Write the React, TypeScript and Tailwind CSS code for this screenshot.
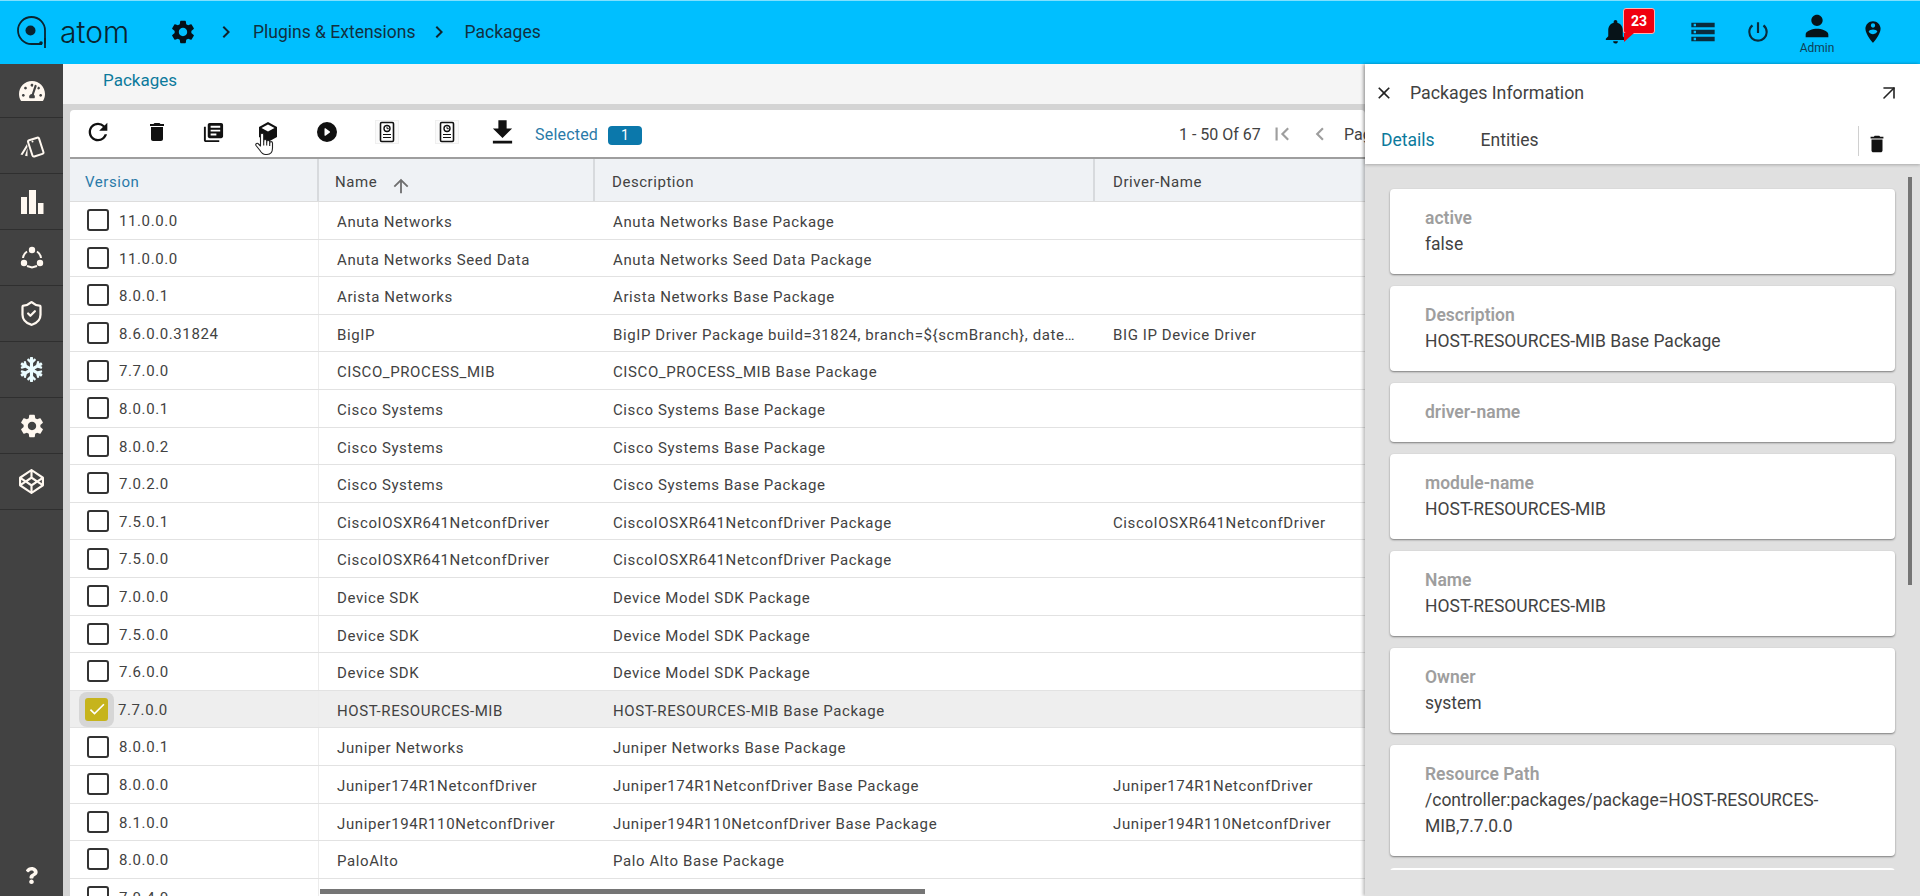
import { FaCodepen, FaQuestion, FaSnowflake, FaTachometerAlt } from 'react-icons/fa';
import { BsPlayCircleFill } from 'react-icons/bs';
import {
  MdArrowUpward,
  MdCheck,
  MdChevronLeft,
  MdChevronRight,
  MdClose,
  MdDelete,
  MdFileDownload,
  MdFirstPage,
  MdLibraryBooks,
  MdNotifications,
  MdPerson,
  MdPersonPinCircle,
  MdPowerSettingsNew,
  MdRefresh,
  MdSettings,
  MdStorage,
} from 'react-icons/md';
import { ShieldCheck, ArrowUpRight } from 'lucide-react';

const rows = [
  ['11.0.0.0', 'Anuta Networks', 'Anuta Networks Base Package', ''],
  ['11.0.0.0', 'Anuta Networks Seed Data', 'Anuta Networks Seed Data Package', ''],
  ['8.0.0.1', 'Arista Networks', 'Arista Networks Base Package', ''],
  ['8.6.0.0.31824', 'BigIP', 'BigIP Driver Package build=31824, branch=${scmBranch}, date=2021-03-17', 'BIG IP Device Driver'],
  ['7.7.0.0', 'CISCO_PROCESS_MIB', 'CISCO_PROCESS_MIB Base Package', ''],
  ['8.0.0.1', 'Cisco Systems', 'Cisco Systems Base Package', ''],
  ['8.0.0.2', 'Cisco Systems', 'Cisco Systems Base Package', ''],
  ['7.0.2.0', 'Cisco Systems', 'Cisco Systems Base Package', ''],
  ['7.5.0.1', 'CiscoIOSXR641NetconfDriver', 'CiscoIOSXR641NetconfDriver Package', 'CiscoIOSXR641NetconfDriver'],
  ['7.5.0.0', 'CiscoIOSXR641NetconfDriver', 'CiscoIOSXR641NetconfDriver Package', ''],
  ['7.0.0.0', 'Device SDK', 'Device Model SDK Package', ''],
  ['7.5.0.0', 'Device SDK', 'Device Model SDK Package', ''],
  ['7.6.0.0', 'Device SDK', 'Device Model SDK Package', ''],
  ['7.7.0.0', 'HOST-RESOURCES-MIB', 'HOST-RESOURCES-MIB Base Package', ''],
  ['8.0.0.1', 'Juniper Networks', 'Juniper Networks Base Package', ''],
  ['8.0.0.0', 'Juniper174R1NetconfDriver', 'Juniper174R1NetconfDriver Base Package', 'Juniper174R1NetconfDriver'],
  ['8.1.0.0', 'Juniper194R110NetconfDriver', 'Juniper194R110NetconfDriver Base Package', 'Juniper194R110NetconfDriver'],
  ['8.0.0.0', 'PaloAlto', 'Palo Alto Base Package', ''],
  ['7.0.4.0', '', '', ''],
];

const details: [string, string][] = [
  ['active', 'false'],
  ['Description', 'HOST-RESOURCES-MIB Base Package'],
  ['driver-name', ''],
  ['module-name', 'HOST-RESOURCES-MIB'],
  ['Name', 'HOST-RESOURCES-MIB'],
  ['Owner', 'system'],
  ['Resource Path', '/controller:packages/package=HOST-RESOURCES-MIB,7.7.0.0'],
];

const ReportIcon = () => (
  <svg width="24" height="24" viewBox="0 0 24 24">
    <rect x="0.5" y="0.5" width="23" height="23" fill="#fafafa" stroke="#efefef" />
    <rect x="5.5" y="2.5" width="13" height="19" rx="1.2" fill="#fff" stroke="#111" strokeWidth="1.6" />
    <circle cx="12" cy="8.5" r="3" fill="none" stroke="#111" strokeWidth="1.4" />
    <path d="M12 6.8v1.9h1.8" fill="none" stroke="#111" strokeWidth="1" />
    <path d="M8 14.5h8M8 17.5h8" stroke="#111" strokeWidth="1.2" />
  </svg>
);

const CubeIcon = () => (
  <svg width="20" height="20" viewBox="0 0 20 20">
    <path d="M10 0 19 5v10l-9 5-9-5V5z" fill="#111" />
    <path d="M10 2.5 16.5 6 10 9.5 3.5 6z" fill="#fff" />
  </svg>
);

const CardsIcon = () => (
  <svg width="26" height="26" viewBox="0 0 26 26" fill="none">
    <rect x="11" y="5.5" width="11.5" height="17" rx="1.5" transform="rotate(-18 17 14)" stroke="#fff8f0" strokeWidth="2" />
    <path d="M8 11 1.5 21.5l2 .6L8.5 14zM8.5 15 6 22.7l2.5.5z" fill="#fff8f0" />
    <circle cx="13.5" cy="8.5" r="1" fill="#fff8f0" />
  </svg>
);

const HubIcon = () => (
  <svg width="26" height="26" viewBox="0 0 26 26" fill="none">
    <path d="M8 6.5A9 9 0 0 0 4 13M18 6.5a9 9 0 0 1 4 6.5M8 21l5 1.5 5-1.5" stroke="#fff8f0" strokeWidth="2" />
    <circle cx="13" cy="5" r="3.2" fill="#fff8f0" />
    <circle cx="5" cy="18" r="3.2" fill="#fff8f0" />
    <circle cx="21" cy="18" r="3.2" fill="#fff8f0" />
  </svg>
);

const BarsIcon = () => (
  <svg width="26" height="26" viewBox="0 0 26 26" fill="#fff8f0">
    <rect x="2" y="8" width="6" height="17" />
    <rect x="10" y="1" width="7" height="24" />
    <rect x="19" y="14" width="5.5" height="11" />
  </svg>
);

const Logo = () => (
  <svg width="30" height="32" viewBox="0 0 30 32" fill="none">
    <path d="M29 27.5V14.5A13.5 13.5 0 1 0 15.5 28H26" stroke="#0a2430" strokeWidth="1.8" />
    <circle cx="14.5" cy="14.5" r="5" fill="#0a2430" />
    <circle cx="25" cy="27" r="1.8" fill="#0a2430" />
    <path d="M29 22v10" stroke="#0a2430" strokeWidth="1.8" />
  </svg>
);

// mouse pointer sitting on the cube button
const HandCursor = () => (
  <svg width="19" height="24" viewBox="0 0 19 24" fill="#fff" stroke="#222" strokeWidth="1.1" strokeLinejoin="round">
    <path d="M5.5 14V2.8a1.6 1.6 0 0 1 3.2 0V9a1.5 1.5 0 0 1 3 0v1a1.5 1.5 0 0 1 3 0v1a1.4 1.4 0 0 1 2.8 0v5c0 4-2 6.5-5.5 6.5h-1.5c-3 0-4-1.5-5.5-4L1 13.5c-1-2 1.5-3 2.5-1.5z" />
    <path d="M8.7 9v4.5M11.7 10v3.5M14.7 11v3" fill="none" />
  </svg>
);

const navIcons = [
  <FaTachometerAlt size={26} color="#fff8f0" />,
  <CardsIcon />,
  <BarsIcon />,
  <HubIcon />,
  <ShieldCheck size={27} color="#fff8f0" strokeWidth={2} />,
  <FaSnowflake size={25} color="#eafcff" />,
  <MdSettings size={28} color="#fff8f0" />,
  <FaCodepen size={25} color="#fff8f0" />,
];

const Checkbox = ({ checked }: { checked: boolean }) =>
  checked ? (
    <span className="flex size-[35px] shrink-0 items-center justify-center rounded-lg bg-[#d6d6d6]">
      <span className="flex size-[23px] items-center justify-center rounded-[3px] bg-[#c6b41c]">
        <MdCheck size={20} color="#fff" />
      </span>
    </span>
  ) : (
    <span className="ml-[9px] mr-[10px] size-[22px] shrink-0 rounded-[3px] border-[2.5px] border-[#333] bg-white" />
  );

export default function App() {
  return (
    <div className="relative flex h-[896px] w-[1920px] flex-col overflow-hidden font-['Roboto',sans-serif] text-[#424242]">
      <header className="flex h-16 shrink-0 items-center border-t border-[#80e0ff] bg-[#00bfff] pb-[2px]">
        <div className="ml-4 flex w-[150px] items-center gap-[14px]">
          <Logo />
          <span className="font-['Inter',sans-serif] text-[30px] font-light leading-none text-[#0a2430]">atom</span>
        </div>
        <MdSettings size={28} color="#051018" className="ml-[3px]" />
        <MdChevronRight size={24} color="#10242e" className="ml-[17px]" />
        <span className="ml-[15px] mt-[1px] text-[17.5px] text-[#12303f]">Plugins &amp; Extensions</span>
        <MdChevronRight size={24} color="#10242e" className="ml-[11px]" />
        <span className="ml-[14px] mt-[1px] text-[17.5px] text-[#12303f]">Packages</span>

        <div className="ml-auto flex items-center pr-[34px]">
          <div className="relative flex w-[40px] justify-center">
            <MdNotifications size={29} color="#071318" />
            <div className="absolute -top-[9px] left-[28px] h-[26px] w-[32px] rounded-[3px] border border-[#ffb3b3] bg-[#f0000f] text-center text-sm font-bold leading-[24px] text-white">
              23
              <span className="absolute -bottom-[9px] left-0 h-0 w-0 border-r-[10px] border-t-[9px] border-r-transparent border-t-[#f0000f]" />
            </div>
          </div>
          <MdStorage size={28} color="#0a2c3c" className="ml-[54px]" />
          <MdPowerSettingsNew size={26} color="#0a2c3c" className="ml-[28px]" />
          <div className="ml-[26px] flex w-[40px] flex-col items-center">
            <MdPerson size={34} color="#071318" className="-mb-[2px]" />
            <span className="text-xs leading-[14px] text-[#0f3e55]">Admin</span>
          </div>
          <MdPersonPinCircle size={26} color="#071318" className="ml-[23px]" />
        </div>
      </header>

      <div className="flex min-h-0 flex-1">
        <aside className="flex w-[63px] shrink-0 flex-col bg-[#424242]">
          {navIcons.map((icon, i) => (
            <div
              key={i}
              className={`flex items-center justify-center border-b border-[#2f2f2f] ${i === 0 ? 'h-[54px]' : 'h-14'}`}
            >
              {icon}
            </div>
          ))}
          <div className="mt-auto flex h-[40px] items-center justify-center pb-[2px]">
            <FaQuestion size={17} color="#fff8f0" />
          </div>
        </aside>

        <main className="flex min-w-0 flex-1 flex-col bg-[#d4d4d4]">
          <div className="flex h-10 shrink-0 items-start bg-[#f5f5f5] pl-10 pt-[4px]">
            <span className="text-[17px] leading-6 text-[#0c7a9c]">Packages</span>
          </div>
          <div className="relative ml-[7px] mt-[6px] min-h-0 flex-1 overflow-hidden rounded-t bg-white">
            <div className="flex h-[49px] items-center border-b-2 border-[#9e9e9e]">
              <div className="flex w-[465px] shrink-0 items-center pb-[3px]">
                <span className="flex w-[56px] justify-center"><MdRefresh size={28} color="#111" /></span>
                <span className="flex w-[62px] justify-center"><MdDelete size={24} color="#111" /></span>
                <span className="flex w-[50px] justify-center"><MdLibraryBooks size={23} color="#111" /></span>
                <span className="flex w-[60px] justify-center"><CubeIcon /></span>
                <span className="flex w-[58px] justify-center"><BsPlayCircleFill size={20} color="#111" /></span>
                <span className="flex w-[62px] justify-center"><ReportIcon /></span>
                <span className="flex w-[58px] justify-center"><ReportIcon /></span>
                <span className="flex w-[52px] justify-center"><MdFileDownload size={33} color="#111" /></span>
              </div>
              <span className="mt-[3px] w-[73px] shrink-0 text-base tracking-[0.2px] text-[#2a7aa8]">Selected</span>
              <span className="mt-[3px] h-[19px] w-[34px] shrink-0 rounded-[4px] bg-[#0b78ab] text-center text-sm leading-[19px] text-white">1</span>
              <span className="ml-[537px] mt-[3px] w-[90px] shrink-0 whitespace-nowrap text-base">1 - 50 Of 67</span>
              <span className="flex shrink-0 items-center text-[#9e9e9e]">
                <MdFirstPage size={26} />
                <MdChevronLeft size={26} className="ml-[12px]" />
              </span>
              <span className="ml-[11px] mt-[3px] text-base">Page</span>
            </div>

            <div className="flex h-[43px] border-b border-[#dddddd] bg-[#eff2f5] text-[15px] tracking-[0.55px]">
              <div className="flex w-[249px] items-center border-r-2 border-[#d7dadd] pl-[15px] pt-[4px] text-[#2a7aa8]">Version</div>
              <div className="flex w-[276px] items-center border-r-2 border-[#d7dadd] pl-[16px] pt-[4px]">
                Name
                <MdArrowUpward size={22} color="#6f6f6f" className="ml-[13px] mt-[8px]" />
              </div>
              <div className="flex w-[500px] items-center border-r-2 border-[#d7dadd] pl-[17px] pt-[4px]">Description</div>
              <div className="flex flex-1 items-center pl-[18px] pt-[4px]">Driver-Name</div>
            </div>

            {rows.map((r, i) => {
              const sel = i === 13;
              return (
                <div
                  key={i}
                  className={`flex h-[37.6px] items-center border-b border-[#e2e2e2] text-[15px] tracking-[0.6px] ${sel ? 'bg-[#eeeeee]' : ''}`}
                >
                  <div className={`flex h-full w-[249px] shrink-0 items-center border-r border-[#ececec] ${sel ? 'pl-[9px]' : 'pl-[8px]'}`}>
                    <Checkbox checked={sel} />
                    <span className={`mt-[2px] ${sel ? 'ml-[4px]' : ''}`}>{r[0]}</span>
                  </div>
                  <div className="mt-[4px] w-[276px] shrink-0 pl-[18px]">{r[1]}</div>
                  <div className="mt-[4px] w-[500px] shrink-0 truncate pl-[18px] pr-[16px]">{r[2]}</div>
                  <div className="mt-[4px] flex-1 pl-[18px]">{r[3]}</div>
                </div>
              );
            })}
            <div className="absolute bottom-[2px] left-[250px] h-[5px] w-[605px] bg-[#757575]" />
          </div>
        </main>

        <section className="z-10 flex w-[555px] shrink-0 flex-col bg-[#e0e0e0] shadow-[-2px_0_3px_rgba(0,0,0,0.25)]">
          <div className="flex h-[100px] shrink-0 flex-col bg-white shadow-[0_1px_3px_rgba(0,0,0,0.25)]">
            <div className="flex h-[60px] items-center pb-[2px] pl-[9px] pr-[19px]">
              <MdClose size={20} color="#222" />
              <span className="ml-[16px] text-[17.8px] text-[#424242]">Packages Information</span>
              <ArrowUpRight size={24} color="#222" strokeWidth={1.6} className="ml-auto" />
            </div>
            <div className="flex flex-1 items-center pb-2 pl-[16px]">
              <span className="text-[17.5px] text-[#0c7a9c]">Details</span>
              <span className="ml-[46px] text-[17.5px]">Entities</span>
              <div className="ml-auto mt-[2px] flex h-[30px] items-center border-l border-[#d0d0d0] pl-[7px] pr-[32px]">
                <MdDelete size={22} color="#111" className="mt-[6px]" />
              </div>
            </div>
          </div>
          <div className="relative">
            <div className="flex h-[706px] flex-col gap-3 overflow-hidden px-[25px] pt-[25px]">
              {details.map(([label, value]) => (
                <div key={label} className="shrink-0 rounded bg-white pb-[17px] pl-[35px] pr-[60px] pt-4 text-[17.5px] leading-[26px] shadow-[0_1px_2px_rgba(0,0,0,0.45)]">
                  <div className="font-semibold text-[#9e9e9e]">{label}</div>
                  {value && <div>{value}</div>}
                </div>
              ))}
              <div className="h-10 shrink-0 rounded bg-white" />
            </div>
            <div className="absolute right-[8px] top-[13px] h-[408px] w-1 bg-[#757575]" />
          </div>
        </section>
      </div>

      <div className="absolute left-[255px] top-[132px] z-20">
        <HandCursor />
      </div>
    </div>
  );
}
